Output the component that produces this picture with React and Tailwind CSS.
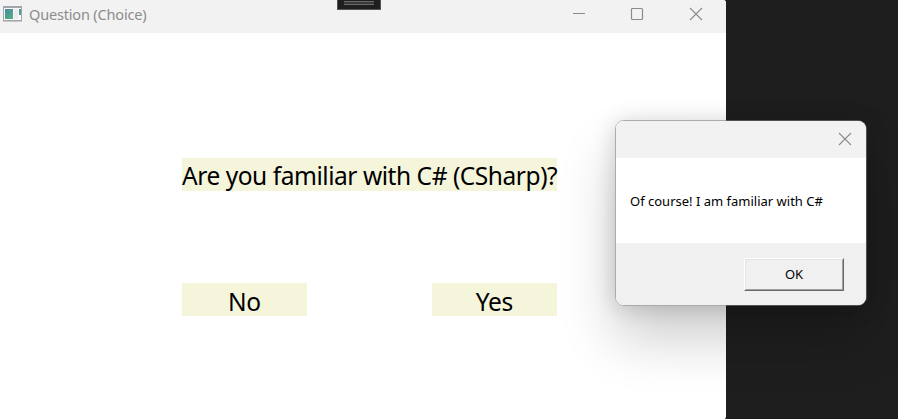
import React from 'react';

function CloseIcon() {
  return (
    <svg width="14" height="14" viewBox="0 0 14 14" fill="none" stroke="#8b8b8b" strokeWidth="1.1">
      <path d="M1 1L13 13M13 1L1 13" />
    </svg>
  );
}

function AppIcon() {
  return (
    <svg width="20" height="16" viewBox="0 0 20 16">
      <defs>
        <linearGradient id="pane" x1="0" y1="0" x2="1" y2="1">
          <stop offset="0" stopColor="#4a87a9" />
          <stop offset="1" stopColor="#53b477" />
        </linearGradient>
      </defs>
      <rect x="0.5" y="0.5" width="18" height="14" fill="#f8f8f8" stroke="#a3a6a9" />
      <path d="M0 1H19" stroke="#a0a6ab" strokeWidth="2" />
      <rect x="2" y="3" width="8" height="10" fill="url(#pane)" />
      <rect x="11" y="3" width="4" height="10" fill="#ececf0" />
      <rect x="16" y="3" width="2" height="6" fill="url(#pane)" />
      <path d="M0 15.5H19" stroke="#c8c8c8" />
    </svg>
  );
}

function QuestionWindow() {
  return (
    <div className="absolute left-0 top-0 flex h-[420px] w-[726px] flex-col overflow-hidden rounded-tr-[3px] rounded-br-[4px] bg-white">
      <header className="flex h-[33px] shrink-0 items-start bg-[#f2f2f2]">
        <div className="ml-[3px] mt-[6px]"><AppIcon /></div>
        <span className="ml-[6px] mt-[4px] whitespace-nowrap text-[14.5px] leading-5 tracking-[-0.17px] text-[#8c8c8c]">Question (Choice)</span>
        <div className="ml-auto mr-[23px] mt-[7px] flex">
          <svg className="mr-[44px]" width="14" height="14" viewBox="0 0 14 14" stroke="#8b8b8b"><path d="M1 6.5H13" /></svg>
          <svg className="mr-[45px]" width="14" height="14" viewBox="0 0 14 14" fill="none" stroke="#8b8b8b" strokeWidth="1.2"><rect x="1.5" y="1.5" width="11" height="11" rx="1" /></svg>
          <CloseIcon />
        </div>
      </header>
      <main className="ml-[181.5px] mt-[125px] w-[375.5px] text-[24.5px] leading-[33px] text-black">
        <div className="h-[33px] whitespace-nowrap bg-[#f5f5dc] pl-[0.5px] pt-px tracking-[-0.45px]">Are you familiar with C# (CSharp)?</div>
        <div className="mt-[92px] flex justify-between text-center tracking-[-0.4px]">
          <button className="h-[33px] w-[125.5px] bg-[#f5f5dc] pt-[2px]">No</button>
          <button className="h-[33px] w-[125.5px] bg-[#f5f5dc] pt-[2px]">Yes</button>
        </div>
      </main>
    </div>
  );
}

function MessageDialog() {
  return (
    <div className="absolute left-[615px] top-[120px] h-[186px] w-[252px] rounded-[9px] border border-[#737373]/60 bg-clip-padding shadow-[0_32px_56px_rgba(0,0,0,0.2),0_2px_21px_rgba(0,0,0,0.16)]">
      <div className="flex h-full flex-col overflow-hidden rounded-[8px] bg-white">
        <header className="flex h-[37px] shrink-0 justify-end bg-[#f2f2f2] pr-[14px] pt-[11px]"><CloseIcon /></header>
        <p className="h-[85px] shrink-0 whitespace-nowrap pl-[14px] pt-[33px] text-[13px] leading-5 tracking-[0px] text-black">Of course! I am familiar with C#</p>
        <footer className="flex flex-1 justify-end bg-[#f0f0f0] pr-[22px] pt-[15px]">
          <button className="h-[33px] w-[100px] border border-b-[#696969] border-l-white border-r-[#696969] border-t-white">
            <span className="flex h-full items-center justify-center border border-b-[#a0a0a0] border-l-[#e3e3e3] border-r-[#a0a0a0] border-t-[#e3e3e3] text-[13px] text-black">OK</span>
          </button>
        </footer>
      </div>
    </div>
  );
}

export default function App() {
  return (
    <div className="relative h-[419px] w-[898px] overflow-hidden bg-[#1e1e1e] font-['Noto_Sans','Open_Sans',sans-serif]">
      <QuestionWindow />
      <div className="absolute left-[337px] top-0 flex h-[10px] w-[44px] flex-col items-center border border-t-0 border-[#555] bg-[#1f1f1f]">
        <div className="mt-px h-[4px] w-[30px] border-y border-[#69696b] bg-[#38383b]" />
      </div>
      <MessageDialog />
    </div>
  );
}
